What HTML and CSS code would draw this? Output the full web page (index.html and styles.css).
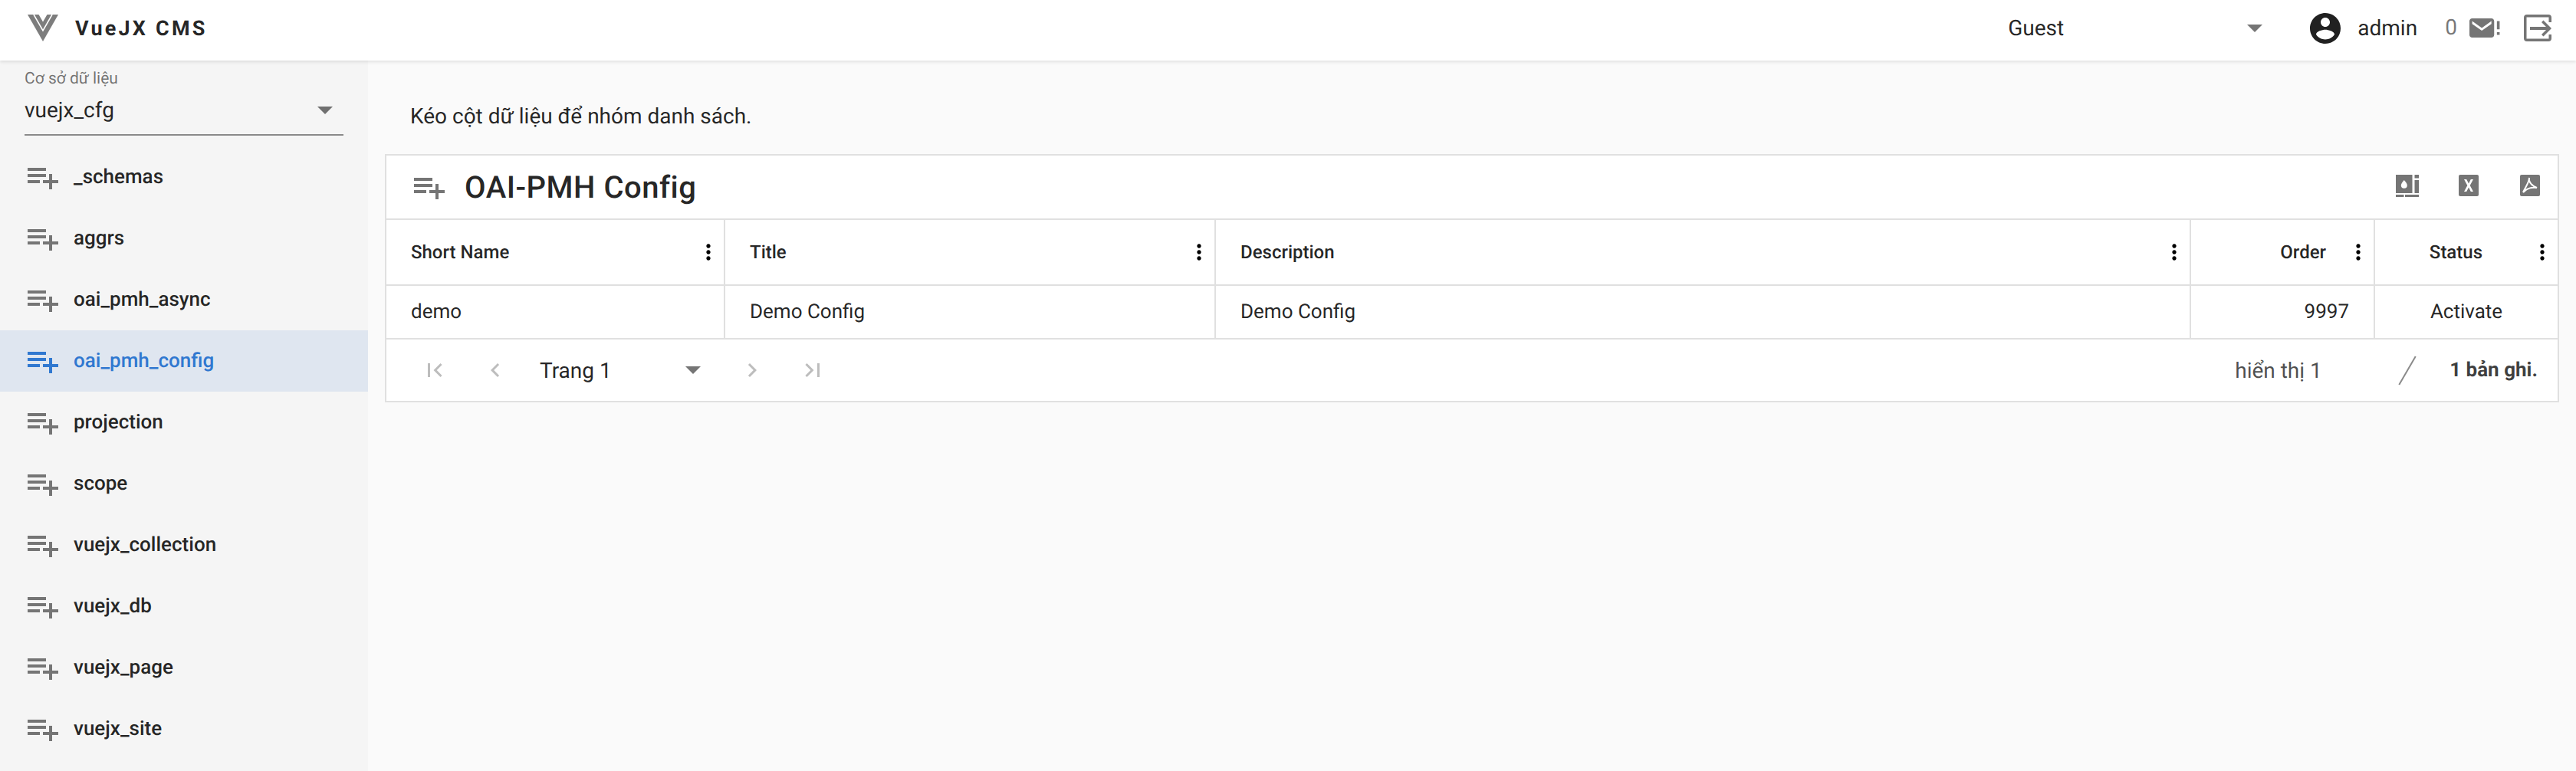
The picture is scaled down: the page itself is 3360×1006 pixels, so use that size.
FILE: index.html
```html
<!DOCTYPE html>
<html lang="vi">
<head>
    <meta charset="UTF-8">
    <title>VueJX CMS</title>
    <link rel="stylesheet" href="styles.css">
</head>
<body>
    <svg class="defs">
        <symbol id="playlist" viewBox="0 0 24 24"><path d="M14 10H2v2h12v-2zm0-4H2v2h12V6zm4 8v-4h-2v4h-4v2h4v4h2v-4h4v-2h-4zM2 16h8v-2H2v2z"/></symbol>
        <symbol id="kebab" viewBox="0 0 24 24"><path d="M12 8c1.100 0 2-.9 2-2s-.9-2-2-2-2 .9-2 2 .9 2 2 2zm0 2c-1.100 0-2 .9-2 2s.9 2 2 2 2-.9 2-2-.9-2-2-2zm0 6c-1.100 0-2 .9-2 2s.9 2 2 2 2-.9 2-2-.9-2-2-2z"/></symbol>
    </svg>

    <header class="topbar">
        <svg class="logo" viewBox="0 0 40 35"><path fill="#7d7d7d" d="M0 0h40L20 35z"/><path fill="none" stroke="#fff" stroke-width="1.600" d="M8 0l12 21L32 0"/><path fill="#fff" d="M14.500 0h11L20 9.500z"/></svg>
        <div class="brand">VueJX CMS</div>
        <div class="spacer"></div>
        <div class="role">
            <span>Guest</span>
            <i class="caret"></i>
        </div>
        <svg class="account" viewBox="0 0 24 24"><path d="M12 2C6.480 2 2 6.480 2 12s4.480 10 10 10 10-4.480 10-10S17.520 2 12 2zm0 3c1.660 0 3 1.340 3 3s-1.340 3-3 3-3-1.340-3-3 1.340-3 3-3zm0 14.200c-2.500 0-4.710-1.280-6-3.220.03-1.990 4-3.080 6-3.080 1.990 0 5.970 1.090 6 3.080-1.290 1.940-3.500 3.220-6 3.220z"/></svg>
        <span class="user">admin</span>
        <span class="count">0</span>
        <svg class="mail" viewBox="0 0 24 24"><path fill-rule="evenodd" d="M16 5H2C.9 5 0 5.900 0 7v10c0 1.100.9 2 2 2h14c1.100 0 2-.9 2-2V7c0-1.100-.9-2-2-2zm0 4l-7 5-7-5V7l7 5 7-5z"/><path d="M20 7h2v6h-2zM20 15h2v2h-2z"/></svg>
        <svg class="logout" viewBox="0 0 36 36"><path d="M4 0h28a4 4 0 0 1 4 4v6h-3.500V3.500h-29v28h29V26H36v5a4 4 0 0 1-4 4H4a4 4 0 0 1-4-4V4a4 4 0 0 1 4-4z"/><path d="M8 16h21l-6-6 2.500-2.500L36 18 25.500 28.500 23 26l6-6H8z"/></svg>
    </header>

    <div class="page">
        <aside class="sidebar">
            <div class="db-select">
                <label>Cơ sở dữ liệu</label>
                <div class="db-value">
                    <span>vuejx_cfg</span>
                    <i class="caret"></i>
                </div>
            </div>
            <nav class="menu">
                <a class="item"><svg><use href="#playlist"/></svg>_schemas</a>
                <a class="item"><svg><use href="#playlist"/></svg>aggrs</a>
                <a class="item"><svg><use href="#playlist"/></svg>oai_pmh_async</a>
                <a class="item active"><svg><use href="#playlist"/></svg>oai_pmh_config</a>
                <a class="item"><svg><use href="#playlist"/></svg>projection</a>
                <a class="item"><svg><use href="#playlist"/></svg>scope</a>
                <a class="item"><svg><use href="#playlist"/></svg>vuejx_collection</a>
                <a class="item"><svg><use href="#playlist"/></svg>vuejx_db</a>
                <a class="item"><svg><use href="#playlist"/></svg>vuejx_page</a>
                <a class="item"><svg><use href="#playlist"/></svg>vuejx_site</a>
            </nav>
        </aside>

        <main class="content">
            <p class="hint">Kéo cột dữ liệu để nhóm danh sách.</p>
            <section class="card">
                <div class="card-title">
                    <svg class="title-icon"><use href="#playlist"/></svg>
                    <h1>OAI-PMH Config</h1>
                    <div class="spacer"></div>
                    <div class="tools">
                        <svg viewBox="0 0 30 30"><path d="M0 0h21.500v24H0zM24.500 0H30v4.500h-5.500zM24.500 7H30v17h-5.500zM0 26h10.500v3H0zM12 26h18v3H12z"/><path fill="#fff" d="M10.800 7c2.500 3 4 5 4 6.800a4 4 0 0 1-8 0C6.800 12 8.300 10 10.800 7z"/></svg>
                        <svg viewBox="0 0 30 30"><rect x="2" y="0" width="26" height="28" rx="2"/><path fill="#fff" d="M9 6h3.200l2.800 5.400L17.800 6H21l-4.300 8 4.300 8h-3.200L15 16.600 12.200 22H9l4.300-8z"/></svg>
                        <svg viewBox="0 0 30 30"><rect x="2" y="0" width="26" height="28" rx="2"/><path fill="none" stroke="#fff" stroke-width="2" d="M14 4c-1 4 2 10 10 13-5-1-13 0-18 6 3-7 8-13 8-19z"/></svg>
                    </div>
                </div>

                <div class="grid head">
                    <div class="cell"><span>Short Name</span><svg class="kebab"><use href="#kebab"/></svg></div>
                    <div class="cell"><span>Title</span><svg class="kebab"><use href="#kebab"/></svg></div>
                    <div class="cell"><span>Description</span><svg class="kebab"><use href="#kebab"/></svg></div>
                    <div class="cell right"><span>Order</span><svg class="kebab"><use href="#kebab"/></svg></div>
                    <div class="cell center"><span>Status</span><svg class="kebab"><use href="#kebab"/></svg></div>
                </div>
                <div class="grid row">
                    <div class="cell">demo</div>
                    <div class="cell">Demo Config</div>
                    <div class="cell">Demo Config</div>
                    <div class="cell num">9997</div>
                    <div class="cell mid">Activate</div>
                </div>

                <div class="pager">
                    <svg class="nav" viewBox="0 0 24 24"><path d="M18.410 16.590L13.820 12l4.590-4.590L17 6l-6 6 6 6zM6 6h2v12H6z"/></svg>
                    <svg class="nav" viewBox="0 0 24 24"><path d="M15.410 7.410L14 6l-6 6 6 6 1.410-1.410L10.830 12z"/></svg>
                    <div class="page-select">
                        <span>Trang 1</span>
                        <i class="caret"></i>
                    </div>
                    <svg class="nav" viewBox="0 0 24 24"><path d="M10 6L8.590 7.410 13.170 12l-4.580 4.590L10 18l6-6z"/></svg>
                    <svg class="nav" viewBox="0 0 24 24"><path d="M5.590 7.410L10.180 12l-4.590 4.590L7 18l6-6-6-6zM16 6h2v12h-2z"/></svg>
                    <div class="spacer"></div>
                    <span class="shown">hiển thị 1</span>
                    <i class="slash"></i>
                    <b class="total">1 bản ghi.</b>
                </div>
            </section>
        </main>
    </div>
</body>
</html>
```

FILE: styles.css
```css
* {
    margin: 0;
    padding: 0;
    box-sizing: border-box;
}

html, body {
    height: 100%;
    overflow: hidden;
}

body {
    font-family: Roboto, "Noto Sans", sans-serif;
    text-rendering: geometricPrecision;
    color: rgba(0, 0, 0, 0.87);
    background: #fafafa;
    display: flex;
    flex-direction: column;
}

.defs {
    display: none;
}

.spacer {
    flex: 1;
}

.caret {
    display: block;
    width: 0;
    height: 0;
    border-left: 10px solid transparent;
    border-right: 10px solid transparent;
    border-top: 10px solid rgba(0, 0, 0, 0.54);
}

/* top bar */
.topbar {
    height: 79px;
    background: #fff;
    display: flex;
    align-items: center;
    padding: 0 32px 6px 36px;
    box-shadow: 0 2px 4px rgba(0, 0, 0, 0.1);
    position: relative;
    z-index: 2;
}

.logo {
    width: 40px;
    height: 35px;
}

.brand {
    font-size: 27px;
    font-weight: 700;
    letter-spacing: 3.2px;
    margin-left: 22px;
}

.role {
    width: 332px;
    display: flex;
    align-items: center;
    justify-content: space-between;
    font-size: 28px;
    margin-right: 58px;
}

.account {
    width: 48px;
    height: 48px;
    fill: #212121;
}

.user {
    font-size: 28px;
    margin-left: 18px;
    width: 114px;
}

.count {
    font-size: 28px;
    color: rgba(0, 0, 0, 0.54);
    margin-bottom: 2px;
}

.mail {
    width: 43px;
    height: 43px;
    fill: #757575;
    margin-left: 16px;
}

.logout {
    width: 36px;
    height: 36px;
    fill: #757575;
    margin-left: 28px;
}

/* sidebar */
.page {
    flex: 1;
    display: flex;
    min-height: 0;
}

.sidebar {
    width: 480px;
    background: #f5f5f5;
}

.db-select {
    height: 88px;
    margin: 10px 32px 14px;
    padding-top: 2px;
    border-bottom: 2px solid #8a8a8a;
}

.db-select label {
    display: block;
    font-size: 21px;
    line-height: 24px;
    color: rgba(0, 0, 0, 0.54);
}

.db-value {
    display: flex;
    align-items: center;
    justify-content: space-between;
    font-size: 28px;
    line-height: 40px;
    padding-right: 14px;
    margin-top: 9px;
}

.item {
    height: 80px;
    display: flex;
    align-items: center;
    padding-left: 32px;
    font-size: 26px;
    font-weight: 500;
}

.item svg {
    width: 48px;
    height: 48px;
    fill: #757575;
    margin-right: 16px;
}

.item.active {
    background: #dfe6f0;
    color: #3078d0;
}

.item.active svg {
    fill: #3078d0;
}

/* content */
.content {
    flex: 1;
    padding: 55px 22px 0;
}

.hint {
    font-size: 28px;
    line-height: 36px;
    padding-left: 33px;
    margin-bottom: 31px;
}

.card {
    background: #fff;
    border: 2px solid #e0e0e0;
}

.card-title {
    height: 84px;
    display: flex;
    align-items: center;
    padding: 0 21px 0 32px;
    border-bottom: 2px solid #e0e0e0;
}

.title-icon {
    width: 48px;
    height: 48px;
    fill: #757575;
    margin-right: 22px;
}

.card-title h1 {
    font-size: 40px;
    font-weight: 500;
    letter-spacing: 0.5px;
}

.tools {
    display: flex;
    gap: 50px;
    margin-top: -3px;
}

.tools svg {
    width: 30px;
    height: 30px;
    fill: #757575;
}

.grid {
    display: grid;
    grid-template-columns: 442px 640px 1272px 240px 1fr;
    border-bottom: 2px solid #e0e0e0;
}

.cell {
    display: flex;
    align-items: center;
    padding: 0 32px;
    font-size: 26px;
    border-right: 2px solid #e0e0e0;
}

.cell:last-child {
    border-right: 0;
}

.head {
    height: 86px;
}

.head .cell {
    font-size: 24px;
    font-weight: 500;
    justify-content: space-between;
    padding-right: 4px;
}

.head .cell.right span {
    margin-left: auto;
    margin-right: 26px;
}

.head .cell.center span {
    margin-left: auto;
    margin-right: 62px;
}

.kebab {
    width: 32px;
    height: 32px;
}

.row {
    height: 70px;
}

.num {
    justify-content: flex-end;
}

.mid {
    justify-content: center;
}

/* pagination */
.pager {
    height: 80px;
    display: flex;
    align-items: center;
    padding: 0 26px 0 45px;
    font-size: 28px;
}

.nav {
    width: 36px;
    height: 36px;
    fill: rgba(0, 0, 0, 0.26);
    margin-right: 43px;
}

.page-select {
    width: 210px;
    display: flex;
    align-items: center;
    justify-content: space-between;
    margin: 0 49px 0 -3px;
}

.shown {
    color: rgba(0, 0, 0, 0.7);
    width: 224px;
}

.slash {
    display: block;
    width: 2px;
    height: 43px;
    background: #8a8a8a;
    transform: rotate(30deg);
    margin-right: 54px;
}

.total {
    font-size: 26px;
    font-weight: 700;
    color: rgba(0, 0, 0, 0.75);
}
```
